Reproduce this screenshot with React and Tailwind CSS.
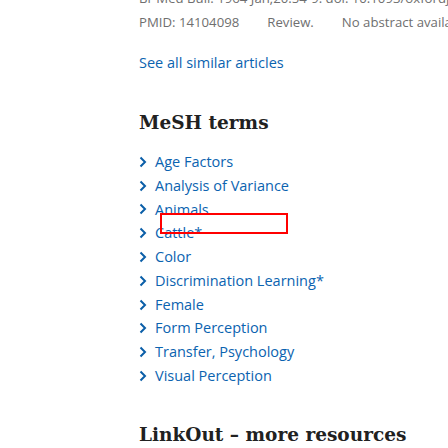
import React from "react";

const terms = [
  "Age Factors",
  "Analysis of Variance",
  "Animals",
  "Cattle*",
  "Color",
  "Discrimination Learning*",
  "Female",
  "Form Perception",
  "Transfer, Psychology",
  "Visual Perception",
];

function Chevron() {
  return (
    <svg width="8" height="12" viewBox="0 0 8 12" className="shrink-0">
      <path d="M1.5 1.5 L6 6 L1.5 10.5" fill="none" stroke="#0a5ea8" strokeWidth="2" />
    </svg>
  );
}

export default function App() {
  return (
    <div
      className="relative w-[448px] h-[448px] overflow-hidden bg-white"
      style={{ fontFamily: '"Open Sans", "Noto Sans", sans-serif' }}
    >
      <div className="pl-[139px]">
        <div className="-mt-[12px] text-[13.2px] leading-[20px] text-[#6f6f6f] whitespace-nowrap">
          Br Med Bull. 1964 Jan;20:54-9. doi: 10.1093/oxfordjournals.bmb.a070285.
        </div>
        <div className="mt-[4px] flex gap-[28px] text-[13.2px] leading-[20px] text-[#6f6f6f] whitespace-nowrap">
          <span>PMID: 14104098</span>
          <span>Review.</span>
          <span>No abstract available.</span>
        </div>
        <div className="mt-[19px] text-[14.5px] leading-[24px] text-[#0b63b0] whitespace-nowrap">
          See all similar articles
        </div>
        <h2
          className="mt-[36px] text-[18.5px] leading-[24px] font-bold text-[#212121] whitespace-nowrap"
          style={{ fontFamily: '"DejaVu Serif", serif' }}
        >
          MeSH terms
        </h2>
        <ul className="mt-[15px] flex flex-col">
          {terms.map((t) => (
            <li key={t} className="flex items-center gap-[8px] h-[23.8px] text-[14.5px] leading-[24px] text-[#0b63b0] whitespace-nowrap">
              <Chevron />
              <span>{t}</span>
            </li>
          ))}
        </ul>
        <h2
          className="mt-[33px] text-[18.5px] leading-[28px] font-bold text-[#212121] whitespace-nowrap"
          style={{ fontFamily: '"DejaVu Serif", serif' }}
        >
          LinkOut – more resources
        </h2>
      </div>
      <div className="absolute left-[160px] top-[213px] w-[128px] h-[21px] border-2 border-[#ff0000]" />
    </div>
  );
}
